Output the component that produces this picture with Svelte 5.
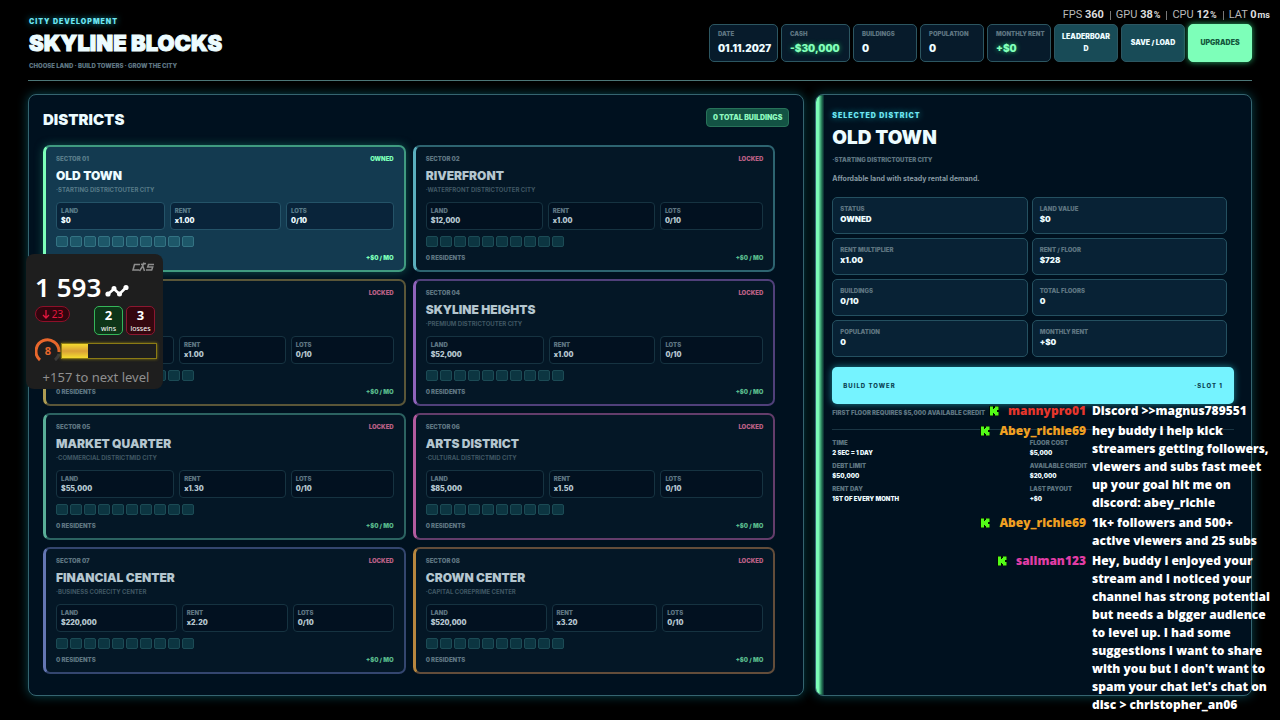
<script>
  const stats = [
    { label: 'Date', value: '01.11.2027', size: 'wide' },
    { label: 'Cash', value: '-$30,000', size: 'wide', money: true },
    { label: 'Buildings', value: '0' },
    { label: 'Population', value: '0' },
    { label: 'Monthly rent', value: '+$0', money: true },
  ]

  const districts = [
    { id: '01', name: 'Old Town', tag: '·Starting districtOuter city', land: '$0', rent: 'x1.00', tone: 'mint', owned: true },
    { id: '02', name: 'Riverfront', tag: '·Waterfront districtOuter city', land: '$12,000', rent: 'x1.00', tone: 'aqua' },
    { id: '03', name: '', tag: '', land: '$28,000', rent: 'x1.00', tone: 'gold' },
    { id: '04', name: 'Skyline Heights', tag: '·Premium districtOuter city', land: '$52,000', rent: 'x1.00', tone: 'violet' },
    { id: '05', name: 'Market Quarter', tag: '·Commercial districtMid city', land: '$55,000', rent: 'x1.30', tone: 'teal' },
    { id: '06', name: 'Arts District', tag: '·Cultural districtMid city', land: '$85,000', rent: 'x1.50', tone: 'pink' },
    { id: '07', name: 'Financial Center', tag: '·Business coreCity center', land: '$220,000', rent: 'x2.20', tone: 'blue' },
    { id: '08', name: 'Crown Center', tag: '·Capital corePrime center', land: '$520,000', rent: 'x3.20', tone: 'orange' },
  ]

  const details = [
    ['Status', 'OWNED'], ['Land value', '$0'],
    ['Rent multiplier', 'x1.00'], ['Rent / floor', '$728'],
    ['Buildings', '0/10'], ['Total floors', '0'],
    ['Population', '0'], ['Monthly rent', '+$0'],
  ]

  const rules = [
    ['Time', '2 SEC = 1 DAY'], ['Floor cost', '$5,000'],
    ['Debt limit', '$50,000'], ['Available credit', '$20,000'],
    ['Rent day', '1ST OF EVERY MONTH'], ['Last payout', '+$0'],
  ]

  const perf = [['FPS', '360', ''], ['GPU', '38', '%'], ['CPU', '12', '%'], ['LAT', '0', 'ms']]

  // Line breaks are kept, see .chat .text
  const chat = [
    { user: 'mannypro01', tone: 'red', text: 'Discord >>magnus789551' },
    { user: 'Abey_richie69', tone: 'amber', text: 'hey buddy i help kick\nstreamers getting followers,\nviewers and subs fast meet\nup your goal hit me on\ndiscord: abey_richie' },
    { user: 'Abey_richie69', tone: 'amber', text: '1k+ followers and 500+\nactive viewers and 25 subs' },
    { user: 'sallman123', tone: 'magenta', text: "Hey, buddy i enjoyed your\nstream and I noticed your\nchannel has strong potential\nbut needs a bigger audience\nto level up. I had some\nsuggestions I want to share\nwith you but I don't want to\nspam your chat let's chat on\ndisc > christopher_an06" },
  ]

  let selected = $state('01')
</script>

<div class="page">
  <header class="top">
    <div class="brand">
      <p class="eyebrow">City development</p>
      <h1>Skyline Blocks</h1>
      <p class="label">Choose land · Build towers · Grow the city</p>
    </div>
    <div class="bar">
      {#each stats as s}
        <div class="stat {s.size ?? ''}" class:money={s.money}>
          <span class="label">{s.label}</span>
          <strong>{s.value}</strong>
        </div>
      {/each}
      <button class="action" type="button">Leaderboard</button>
      <button class="action" type="button">Save / Load</button>
      <button class="action primary" type="button">Upgrades</button>
    </div>
  </header>

  <main>
    <section class="panel list">
      <div class="list-head">
        <h2>Districts</h2>
        <span class="total">0 total buildings</span>
      </div>
      <div class="cards">
        {#each districts as d}
          <button class="card {d.tone}" class:owned={d.owned} type="button"
                  aria-pressed={selected === d.id} onclick={() => selected = d.id}>
            <span class="row">
              <span class="label">Sector {d.id}</span>
              <span class="state">{d.owned ? 'Owned' : 'Locked'}</span>
            </span>
            <span class="name">{d.name}</span>
            <span class="label tag">{d.tag}</span>
            <span class="cells">
              <span class="cell"><span class="label">Land</span><b>{d.land}</b></span>
              <span class="cell"><span class="label">Rent</span><b>{d.rent}</b></span>
              <span class="cell"><span class="label">Lots</span><b>0/10</b></span>
            </span>
            <span class="lots">
              {#each Array(10) as _}<i></i>{/each}
            </span>
            <span class="row foot">
              <span class="label">0 residents</span>
              <span class="income">+$0 / mo</span>
            </span>
          </button>
        {/each}
      </div>
    </section>

    <section class="panel detail">
      <p class="eyebrow">Selected district</p>
      <h2>Old Town</h2>
      <p class="label">·Starting districtOuter city</p>
      <p class="desc">Affordable land with steady rental demand.</p>
      <dl class="facts">
        {#each details as [label, value]}
          <div><dt class="label">{label}</dt><dd>{value}</dd></div>
        {/each}
      </dl>
      <button class="build" type="button"><span>Build tower</span><span>·Slot 1</span></button>
      <p class="label note">First floor requires $5,000 available credit</p>
      <dl class="rules">
        {#each rules as [label, value]}
          <div><dt class="label">{label}</dt><dd>{value}</dd></div>
        {/each}
      </dl>
    </section>
  </main>

  <div class="perf">
    {#each perf as [name, value, unit]}
      <span>{name} <b>{value}{#if unit}<small>{unit}</small>{/if}</b></span>
    {/each}
  </div>

  <aside class="rank">
    <svg class="game" viewBox="0 0 24 12" width="24" height="12" fill="none" stroke="#8d8d8d" stroke-width="1.5">
      <path d="M9 3.5H3.5L2 9h6M23 3.5h-5.500l-.8 2.500h5l-1 3H15" />
      <path d="M13 1.500l-1.500 4-3 4.500M10 3.500l5-1M12 5.500l1.500 4.500" />
    </svg>
    <div class="elo">
      <strong>1 593</strong>
      <svg viewBox="0 0 24 14" width="24" height="14" fill="#fff" stroke="#fff" stroke-width="2">
        <path d="M3 11l6-5 5.500 5L21 4.500" fill="none" stroke-width="2.600" />
        <circle cx="3" cy="11" r="1.6" /><circle cx="9" cy="5.500" r="1.5" />
        <circle cx="14.500" cy="11" r="1.5" /><circle cx="21" cy="4.500" r="1.6" />
      </svg>
    </div>
    <div class="record">
      <span class="change">
        <svg viewBox="0 0 8 9" width="8" height="9" fill="none" stroke="currentColor" stroke-width="1.3"><path d="M4 0v8M1 5l3 3 3-3" /></svg>23
      </span>
      <span class="score win"><b>2</b>wins</span>
      <span class="score loss"><b>3</b>losses</span>
    </div>
    <div class="level">
      <svg viewBox="0 0 26 26" width="26" height="26">
        <path d="M5 22A11.500 11.500 0 1 1 24 14" fill="none" stroke="#e8672c" stroke-width="3" />
        <path d="M24 16A11 11 0 0 1 20 22" fill="none" stroke="#3a3a3a" stroke-width="3" />
        <text x="13" y="17" text-anchor="middle">8</text>
      </svg>
      <div class="track"><div class="fill"></div></div>
    </div>
    <p>+157 to next level</p>
  </aside>

  <div class="chat">
    {#each chat as m}
      <span class="user {m.tone}">
        <svg viewBox="0 0 10 10" width="10" height="10"><rect width="10" height="10" fill="#031003" /><path d="M1 0.500h3v2.500h1V2h1V0.500h3.500V4H8v2h1.500v3.500H6V8H5V7H4v2.500H1z" fill="#53fc18" /></svg>
        {m.user}
      </span>
      <span class="text">{m.text}</span>
    {/each}
  </div>
</div>

<style>
  :global(body) { background: #000; }
  .page {
    position: relative;
    box-sizing: border-box;
    min-height: 100vh;
    padding: 16px 28px 24px;
    display: flex; flex-direction: column; gap: 13px;
    overflow: hidden;
    color: #edfcff;
    font-family: Inter, 'Open Sans', sans-serif;
    font-weight: 900;
  }
  .page * { box-sizing: border-box; }
  p, h1, h2, dl, dd { margin: 0; }
  button { font: inherit; color: inherit; cursor: pointer; }

  .label {
    color: #5d7480;
    font-size: 6px; line-height: 8px;
    text-transform: uppercase;
    white-space: nowrap;
  }
  .eyebrow {
    color: #6de6f2;
    font-size: 7px; line-height: 12px; letter-spacing: 1px;
    text-transform: uppercase;
    text-shadow: 0 0 6px #1798a8;
  }

  .top {
    display: flex; justify-content: space-between; align-items: flex-start;
    height: 65px;
    border-bottom: 1px solid #4d7778;
  }
  h1, h2 { font-weight: 900; text-transform: uppercase; }
  h1 { font-size: 22px; line-height: 30px; padding-left: 1px; -webkit-text-stroke: 1px currentColor; }
  .brand .eyebrow, .brand .label { padding-left: 1px; }
  .brand .label { margin-top: 4px; }
  .bar { display: flex; gap: 3px; margin-top: 8px; }
  .stat, .action {
    width: 64px; height: 38px;
    border: 1px solid #2c5661;
    border-radius: 5px;
  }
  .stat {
    display: flex; flex-direction: column; gap: 2px;
    padding: 5px 8px;
    background: #071b2b;
  }
  .stat.wide { width: 69px; }
  .stat strong { font-size: 10px; line-height: 16px; font-weight: 900; white-space: nowrap; }
  .stat.money strong { color: #82ffb9; text-shadow: 0 0 5px #1fae63; }
  .action {
    padding: 0 5px;
    background: #184b57;
    font-size: 7px; line-height: 12px;
    text-transform: uppercase;
    overflow-wrap: anywhere;
  }
  .action.primary {
    background: #7dffb9; border-color: #7dffb9;
    color: #14593d;
    box-shadow: 0 0 6px #2ab06c;
  }

  main { flex: 1; display: grid; grid-template-columns: 16fr 9fr; gap: 11px; }
  .panel {
    background: #00111f;
    border: 1px solid #356570;
    border-radius: 8px;
    box-shadow: 0 0 11px #084550;
  }
  .list { padding: 13px 14px; }
  .list-head { display: flex; justify-content: space-between; align-items: flex-start; height: 22px; margin-bottom: 15px; }
  .list-head h2 { align-self: flex-end; font-size: 15px; line-height: 20px; }
  .total {
    padding: 0 6px;
    background: #135344;
    border: 1px solid #287259;
    border-radius: 4px;
    color: #8df8be;
    font-size: 7px; line-height: 17px;
    text-transform: uppercase;
  }
  .cards { display: grid; grid-template-columns: 1fr 1fr; gap: 7px; padding-right: 14px; }

  .card {
    display: flex; flex-direction: column;
    height: 127px;
    padding: 8px 10px 9px;
    background: #041726;
    border: 2px solid var(--edge);
    border-left: 3px solid var(--tone);
    border-radius: 7px;
    color: #b4c6cf;
    text-align: left;
  }
  .mint { --tone: #7dffb9; --edge: #409b80; }
  .aqua { --tone: #5aaebd; --edge: #2d6470; }
  .gold { --tone: #ad9c53; --edge: #5a5638; }
  .violet { --tone: #8f63bb; --edge: #50407a; }
  .teal { --tone: #59ae97; --edge: #2c6361; }
  .pink { --tone: #b35b9f; --edge: #643d6b; }
  .blue { --tone: #6476b3; --edge: #34466f; }
  .orange { --tone: #b7863f; --edge: #634d3a; }
  .owned { background: #133a50; color: #edfcff; box-shadow: 0 0 8px #10524d; }
  .row { display: flex; justify-content: space-between; line-height: 8px; }
  .state { color: #b85f84; font-size: 6px; text-transform: uppercase; }
  .owned .state { color: #7dffb9; }
  .name {
    min-height: 18px;
    margin-top: 4px;
    font-size: 12px; line-height: 18px;
    text-transform: uppercase;
  }
  .tag { min-height: 8px; margin-top: 1px; font-weight: 700; color: #405864; }
  .owned .label { color: #577a88; }
  .cells { display: flex; gap: 5px; margin-top: 8px; }
  .cell {
    flex: 1 1 auto;
    display: flex; flex-direction: column;
    padding: 3px 4px;
    background: #021120;
    border: 1px solid #163341;
    border-radius: 4px;
    font-size: 7px;
  }
  .owned .cell { background: #09243a; border-color: #245368; }
  .cell .label { line-height: 9px; }
  .cell b { font-weight: 900; line-height: 11px; }
  .lots { display: flex; gap: 2px; margin-top: 6px; }
  .lots i {
    width: 12px; height: 11px;
    background: #0c3541;
    border: 1px solid #1c4b55;
    border-radius: 2px;
  }
  .owned .lots i { background: #1d5769; border-color: #347383; }
  .foot { margin-top: 7px; }
  .income { color: #58b98b; font-size: 6px; text-transform: uppercase; }
  .owned .income { color: #7dffb9; }

  .detail { position: relative; padding: 15px 17px 14px 16px; overflow: hidden; }
  .detail::before {
    content: '';
    position: absolute; inset: 0 auto 0 0;
    width: 8px;
    background: linear-gradient(90deg, #7dffb9 30%, #287c59 70%, #06252c);
  }
  .detail h2 { font-size: 19px; line-height: 30px; margin-top: 1px; }
  .detail > .label { margin-top: 3px; }
  .desc { margin-top: 10px; color: #8799a3; font-size: 7px; font-weight: 700; line-height: 10px; }
  .facts { display: grid; grid-template-columns: 1fr 1fr; gap: 4px; margin-top: 13px; padding-right: 7px; }
  .facts div {
    height: 37px;
    padding: 7px;
    background: #082235;
    border: 1px solid #245060;
    border-radius: 5px;
  }
  .facts dd { font-size: 8px; line-height: 13px; }
  .build {
    display: flex; justify-content: space-between; align-items: center;
    width: 100%; height: 37px;
    margin-top: 10px; padding: 0 11px;
    background: #75f3ff;
    border: none;
    border-radius: 5px;
    box-shadow: 0 0 7px #198090;
    color: #0b4252;
    font-size: 6px; font-weight: 800; letter-spacing: 1px;
    text-transform: uppercase;
  }
  .detail > .note { margin: 5px 0 12px; }
  .rules {
    display: grid; grid-template-columns: 1fr 1fr; row-gap: 4px;
    padding: 9px 7px 0 0;
    border-top: 1px solid #1a3543;
  }
  .rules dd { font-size: 6px; line-height: 11px; }

  .perf {
    position: absolute; top: 8px; right: 10px;
    display: flex;
    color: #b9b9b9;
    font: 11px/14px Roboto, sans-serif;
  }
  .perf span + span { margin-left: 6px; padding-left: 6px; background: linear-gradient(#777, #777) left center / 1px 9px no-repeat; }
  .perf b { color: #ddd; font-weight: 700; }
  .perf small { margin-left: 1px; font-size: 9px; }

  .rank {
    position: absolute; left: 26px; top: 254px;
    display: flex; flex-direction: column;
    width: 137px; height: 135px;
    padding: 7px 6px 0 9px;
    background: #1e1e1e;
    border-radius: 8px;
    color: #fff;
    font-family: 'Noto Sans', sans-serif; font-weight: 400;
  }
  .game { align-self: flex-end; margin-right: 2px; }
  .elo { display: flex; align-items: center; gap: 4px; height: 28px; }
  .elo strong { font-size: 26px; line-height: 28px; font-weight: 600; }
  .elo svg { margin-top: 6px; }
  .record { display: flex; gap: 3px; margin-top: 5px; padding-right: 2px; }
  .change {
    display: flex; align-items: center; justify-content: center; gap: 2px;
    width: 35px; height: 16px;
    margin-right: auto;
    background: #31050e;
    border: 1px solid #8d1029;
    border-radius: 8px;
    color: #e5173f;
    font-size: 10px;
  }
  .score {
    display: flex; flex-direction: column; align-items: center;
    width: 29px; height: 29px;
    border-radius: 5px;
    font-size: 7px; line-height: 9px;
  }
  .score b { font-size: 13px; line-height: 17px; }
  .win { background: #0e3518; border: 1px solid #35b65a; }
  .loss { background: #34070f; border: 1px solid #8c1730; }
  .level { display: flex; align-items: center; margin-top: 3px; }
  .level text { fill: #e8672c; font-size: 11px; font-weight: 700; }
  .track { flex: 1; height: 16px; border: 1px solid #8b7b14; box-shadow: 0 0 3px #8b7b14; }
  .fill { width: 28%; height: 100%; background: linear-gradient(#f5dc2f, #d9a037, #f5dc2f); }
  .rank p { margin-top: 4px; color: #8f8f8f; font-size: 13px; line-height: 18px; text-align: center; }

  .chat {
    position: absolute; right: 8px; top: 402px;
    display: grid; grid-template-columns: auto 180px;
    row-gap: 2px;
    font: 800 12px/18px 'Open Sans', sans-serif;
    color: #fff;
  }
  .user {
    display: flex; align-items: center; justify-content: flex-end; gap: 9px;
    height: 18px;
    padding-right: 6px;
  }
  .chat .text { white-space: pre; }
  .red { color: #e5362c; }
  .amber { color: #f0a022; }
  .magenta { color: #e23da6; }
</style>
